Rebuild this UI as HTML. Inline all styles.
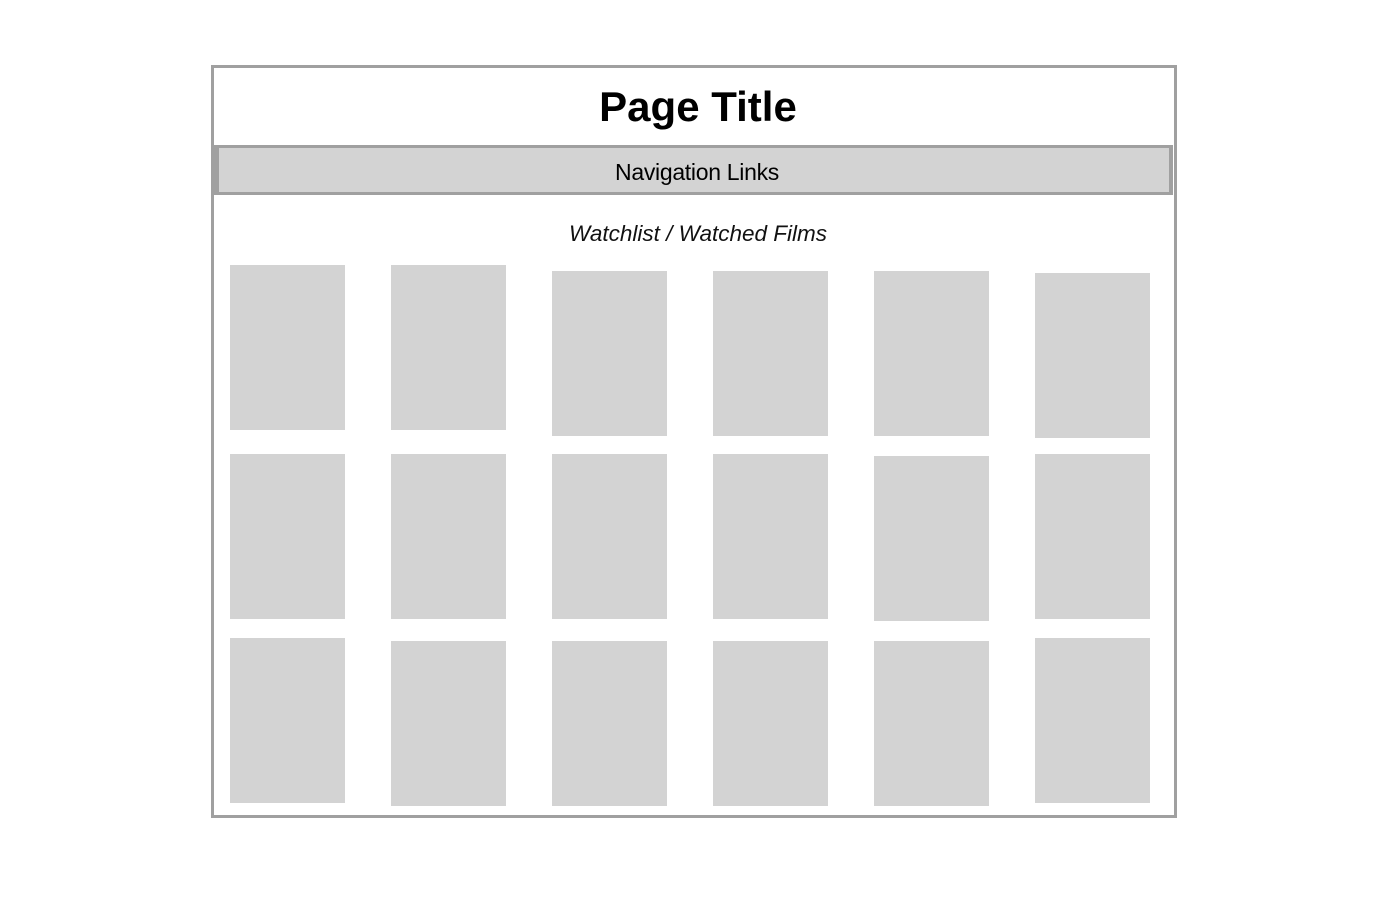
<!DOCTYPE html>
<html><head><style>
body{margin:0;width:1381px;height:917px;background:#fff;position:relative;font-family:"Liberation Sans",sans-serif;overflow:hidden}
.o{position:absolute;left:211px;top:65px;width:960px;height:747px;border:3px solid #a0a0a0}
.nav{position:absolute;left:214px;top:145px;width:950px;height:44px;border:3px solid #a0a0a0;border-left-width:5px;border-right-width:4px;background:#d3d3d3;text-align:center;line-height:48px;font-size:23px;letter-spacing:-0.3px}
.t{position:absolute;left:215px;width:966px;top:83px;text-align:center;font-weight:bold;font-size:42px}
.s{position:absolute;left:211px;width:974px;top:221px;text-align:center;font-style:italic;font-size:22.5px;color:#111}
.r{position:absolute;width:115px;height:165px;background:#d3d3d3}
</style></head><body>
<div class="o"></div>
<div class="t">Page Title</div>
<div class="nav"><span style="position:relative;left:3px">Navigation Links</span></div>
<div class="s">Watchlist / Watched Films</div>
<div class="r" style="left:230px;top:265px"></div>
<div class="r" style="left:391px;top:265px"></div>
<div class="r" style="left:552px;top:271px"></div>
<div class="r" style="left:713px;top:271px"></div>
<div class="r" style="left:874px;top:271px"></div>
<div class="r" style="left:1035px;top:273px"></div>
<div class="r" style="left:230px;top:454px"></div>
<div class="r" style="left:391px;top:454px"></div>
<div class="r" style="left:552px;top:454px"></div>
<div class="r" style="left:713px;top:454px"></div>
<div class="r" style="left:874px;top:456px"></div>
<div class="r" style="left:1035px;top:454px"></div>
<div class="r" style="left:230px;top:638px"></div>
<div class="r" style="left:391px;top:641px"></div>
<div class="r" style="left:552px;top:641px"></div>
<div class="r" style="left:713px;top:641px"></div>
<div class="r" style="left:874px;top:641px"></div>
<div class="r" style="left:1035px;top:638px"></div>
</body></html>
